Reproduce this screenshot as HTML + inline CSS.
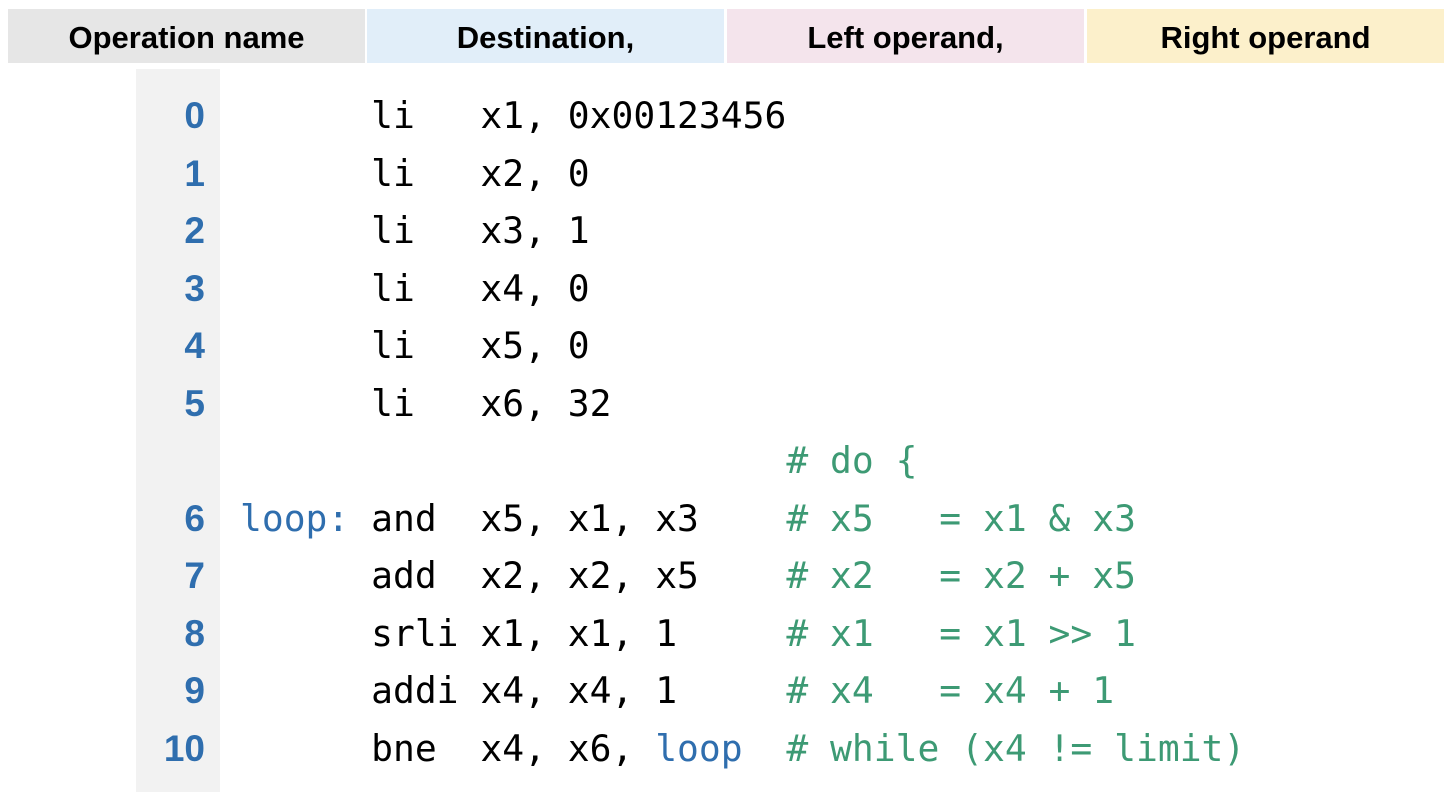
<!DOCTYPE html>
<html><head><meta charset="utf-8"><style>
body{margin:0;width:1448px;height:792px;background:#fff;position:relative;overflow:hidden}
.h{position:absolute;top:9px;height:54px;font:bold 31px "Liberation Sans",sans-serif;line-height:58px;text-align:center;color:#000}
.g{position:absolute;left:136px;top:69px;width:84px;height:723px;background:#f2f2f2}
.n{position:absolute;left:130px;width:75px;text-align:right;font:bold 37px "Liberation Sans",sans-serif;line-height:57px;color:#2f6eae;height:57px}
.c{position:absolute;left:240px;font-family:"DejaVu Sans Mono",monospace;font-size:36.3px;white-space:pre;height:57px;line-height:57px;color:#000}
.b{color:#2f6eae}.m{color:#3d9a74}
</style></head><body>
<div class="h" style="left:8px;width:357px;background:#e6e6e6">Operation name</div>
<div class="h" style="left:367px;width:357px;background:#e1eef9">Destination,</div>
<div class="h" style="left:727px;width:357px;background:#f4e4ec">Left operand,</div>
<div class="h" style="left:1087px;width:357px;background:#fcf0cb">Right operand</div>
<div class="g"></div>
<div class="n" style="top:87px">0</div><div class="c" style="top:87px">      li   x1, 0x00123456</div>
<div class="n" style="top:145px">1</div><div class="c" style="top:145px">      li   x2, 0</div>
<div class="n" style="top:202px">2</div><div class="c" style="top:202px">      li   x3, 1</div>
<div class="n" style="top:260px">3</div><div class="c" style="top:260px">      li   x4, 0</div>
<div class="n" style="top:317px">4</div><div class="c" style="top:317px">      li   x5, 0</div>
<div class="n" style="top:375px">5</div><div class="c" style="top:375px">      li   x6, 32</div>
<div class="c" style="top:432px">                         <span class="m"># do {</span></div>
<div class="n" style="top:490px">6</div><div class="c" style="top:490px"><span class="b">loop:</span> and  x5, x1, x3    <span class="m"># x5   = x1 &amp; x3</span></div>
<div class="n" style="top:547px">7</div><div class="c" style="top:547px">      add  x2, x2, x5    <span class="m"># x2   = x2 + x5</span></div>
<div class="n" style="top:605px">8</div><div class="c" style="top:605px">      srli x1, x1, 1     <span class="m"># x1   = x1 &gt;&gt; 1</span></div>
<div class="n" style="top:662px">9</div><div class="c" style="top:662px">      addi x4, x4, 1     <span class="m"># x4   = x4 + 1</span></div>
<div class="n" style="top:720px">10</div><div class="c" style="top:720px">      bne  x4, x6, <span class="b">loop</span>  <span class="m"># while (x4 != limit)</span></div>
</body></html>
